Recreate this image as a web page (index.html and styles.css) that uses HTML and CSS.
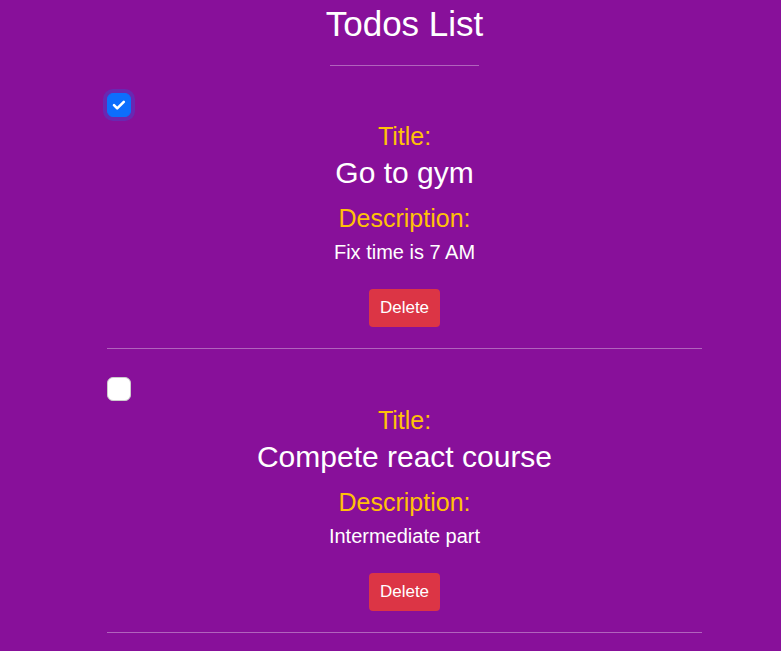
FILE: index.html
```html
<!DOCTYPE html>
<html>
<head>
<meta charset="utf-8">
<link rel="stylesheet" href="styles.css">
</head>
<body>
<div class="page">
  <h1 class="heading">Todos List</h1>
  <hr class="short-rule">
  <div class="todo">
    <div class="check checked">
      <svg width="24" height="24" viewBox="0 0 24 24"><path d="M7 12.2l3.2 3.2 6.6-6.6" fill="none" stroke="#fff" stroke-width="2.6" stroke-linecap="round" stroke-linejoin="round"/></svg>
    </div>
    <div class="body">
      <div class="label">Title:</div>
      <div class="title">Go to gym</div>
      <div class="label desc-label">Description:</div>
      <div class="desc">Fix time is 7 AM</div>
      <button class="delete">Delete</button>
    </div>
  </div>
  <hr class="rule">
  <div class="todo">
    <div class="check"></div>
    <div class="body">
      <div class="label">Title:</div>
      <div class="title">Compete react course</div>
      <div class="label desc-label">Description:</div>
      <div class="desc">Intermediate part</div>
      <button class="delete">Delete</button>
    </div>
  </div>
  <hr class="rule">
</div>
</body>
</html>
```
FILE: styles.css
```css
html, body {
  margin: 0;
  padding: 0;
  background: #88109a;
  font-family: "Liberation Sans", Arial, sans-serif;
  color: #fff;
}
.page {
  width: 595px;
  margin-left: 107px;
  padding-top: 2px;
}
.heading {
  margin: 0;
  font-size: 35px;
  font-weight: 400;
  line-height: 43px;
  text-align: center;
}
.short-rule {
  width: 149px;
  margin: 20px auto 0;
  border: 0;
  border-top: 1px solid rgba(255,255,255,0.35);
}
.rule {
  width: 100%;
  margin: 0;
  border: 0;
  border-top: 1px solid rgba(255,255,255,0.35);
}
.todo {
  padding-top: 28px;
  padding-bottom: 21px;
}
.short-rule + .todo {
  padding-top: 27px;
}
.check {
  width: 24px;
  height: 24px;
  box-sizing: border-box;
  border-radius: 6px;
  background: #fff;
  border: 1px solid #ccc;
}
.check.checked {
  background: #0d6efd;
  border-color: #0d6efd;
  box-shadow: 0 0 0 4px rgba(13,110,253,0.25);
}
.check svg {
  display: block;
  margin: -1px;
}
.body {
  display: flex;
  flex-direction: column;
  align-items: center;
  text-align: center;
}
.label {
  color: #ffc107;
  font-size: 25px;
  line-height: 29px;
  margin-top: 5px;
}
.title {
  font-size: 30px;
  line-height: 34px;
  margin-top: 5px;
}
.label.desc-label {
  margin-top: 14px;
}
.desc {
  font-size: 20px;
  line-height: 24px;
  margin-top: 7px;
}
.delete {
  margin-top: 25px;
  background: #dc3545;
  color: #fff;
  border: 0;
  border-radius: 4px;
  font-family: "Liberation Sans", Arial, sans-serif;
  font-size: 17px;
  line-height: 26px;
  padding: 6px 11px;
}
```
